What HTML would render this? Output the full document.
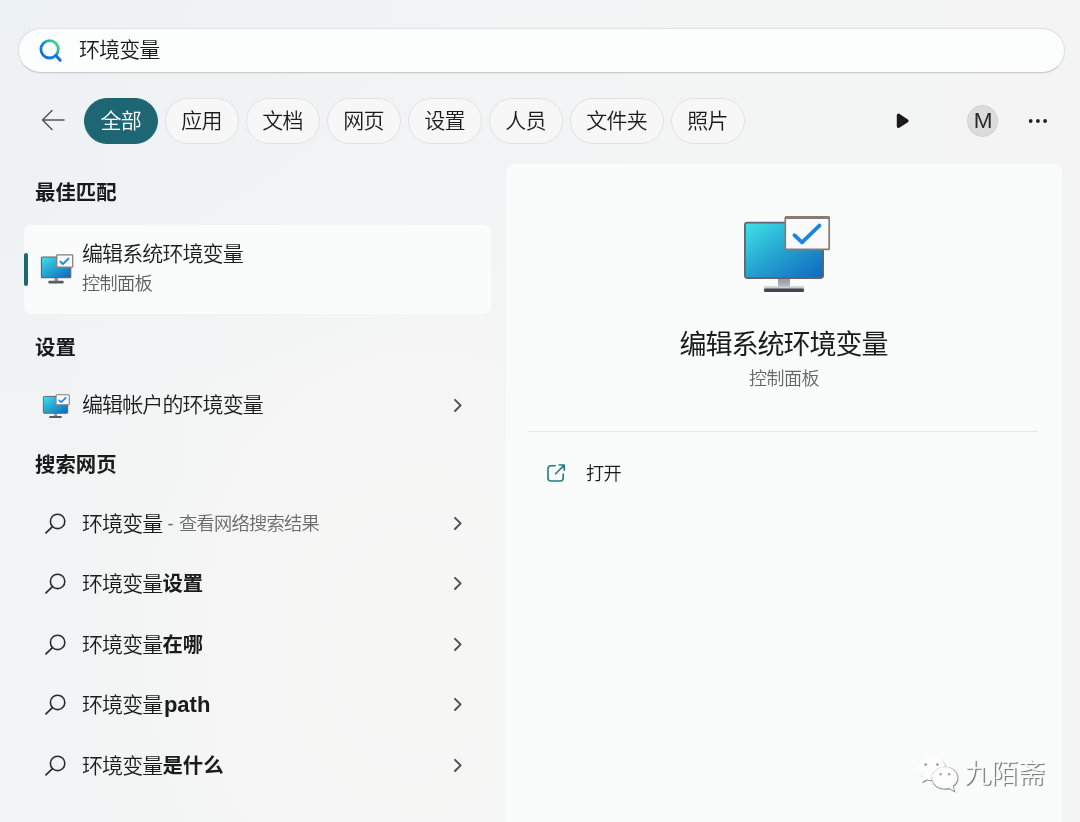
<!DOCTYPE html>
<html lang="zh-CN">
<head>
<meta charset="utf-8">
<title>搜索 - 环境变量</title>
<style>
*{box-sizing:border-box;margin:0;padding:0}
html,body{width:1080px;height:822px;overflow:hidden}
body{position:relative;background:radial-gradient(ellipse 700px 420px at 0 0,rgba(232,240,245,.5),rgba(232,240,245,0) 100%),radial-gradient(ellipse 420px 520px at 420px 640px,rgba(247,247,246,.9),rgba(247,247,246,0) 100%),linear-gradient(90deg,#f1f3f4 0,#f3f4f4 240px,#f4f4f4 100%);font-family:"Liberation Sans","Noto Sans CJK SC",sans-serif;color:#1b1b1b;font-weight:350}
.abs{position:absolute}
.t{position:absolute;white-space:nowrap;line-height:1}
.t,.row,h2,.tab{will-change:transform}
/* search box */
#sb{left:17.5px;top:27.8px;width:1047px;height:45.5px;border-radius:23px;background:#fcfdfd;border:1.3px solid #dfe0e0;border-bottom-color:#cbcccc;box-shadow:0 1px 1.5px rgba(0,0,0,.05)}
/* tabs */
.tab{position:absolute;top:98px;height:45.5px;border-radius:23px;background:#f7f7f7;border:1.2px solid #e0e1e1;font-size:21px;letter-spacing:-.8px;text-indent:-.8px;line-height:44px;text-align:center;color:#1b1b1b}
.tab.on{background:#1f6675;border-color:#1f6675;color:#fff}
h2{position:absolute;left:34.5px;font-size:20.4px;font-weight:700;line-height:1;white-space:nowrap;color:#1a1a1a}
.row{position:absolute;left:81.9px;font-size:21px;letter-spacing:-0.9px;line-height:1;white-space:nowrap;color:#1b1b1b}
.row b{font-weight:700;font-size:20.4px;letter-spacing:0}
.row .g i{font-style:normal;letter-spacing:0;margin:0 5.4px 0 5.2px}
.row .g{font-size:18.2px;letter-spacing:-0.7px;color:#6a6a6a;position:relative;top:-1.2px}
#card{left:24px;top:225px;width:467px;height:89px;border-radius:7px;background:#fafbfb}
#bar{left:24px;top:253px;width:4px;height:33px;border-radius:2px;background:#1f6675}
#panel{left:506px;top:164px;width:556px;height:700px;border-radius:9px;background:#fafbfb}
#hr{left:528px;top:431px;width:510px;height:1px;background:#e6e7e7}
svg{position:absolute;overflow:visible}
</style>
</head>
<body>
<svg width="0" height="0" style="left:0;top:0"><defs>
<linearGradient id="mg" x1="0" y1="0" x2="1" y2="1"><stop offset="0" stop-color="#40e3e8"/><stop offset=".45" stop-color="#27a7d3"/><stop offset="1" stop-color="#0d67c0"/></linearGradient>
<linearGradient id="st" x1="0" y1="0" x2="0" y2="1"><stop offset="0" stop-color="#8f959b"/><stop offset="1" stop-color="#b9bec4"/></linearGradient>
<symbol id="mon" viewBox="0 0 86 76" overflow="visible">
<rect x="34" y="62" width="12" height="9" fill="url(#st)"/>
<rect x="20" y="70.3" width="40" height="3" rx="1" fill="#c9ced4"/>
<rect x="20" y="72.6" width="40" height="3.4" rx="1.2" fill="#41464c"/>
<rect x=".9" y="6.6" width="78.2" height="55.4" rx="2.4" fill="url(#mg)" stroke="#626569" stroke-width="1.8"/>
<rect x="41.3" y=".8" width="43.9" height="32.6" rx="1" fill="#fafafa" stroke="#877b75" stroke-width="1.7"/><rect x="41.3" y=".8" width="43.9" height="2.2" fill="#877b75"/>
<path d="M50.4 19.2 L58 26.4 L75.4 9.6" fill="none" stroke="#1b85e2" stroke-width="3.8" stroke-linecap="round" stroke-linejoin="round"/>
</symbol>
<symbol id="mons" viewBox="0 0 86 79" preserveAspectRatio="none" overflow="visible">
<rect x="36" y="62" width="9" height="11" fill="#8e959c"/>
<rect x="20" y="71.5" width="40" height="7.2" rx="1.5" fill="#565d64"/>
<rect x="1.2" y="8" width="78" height="55" rx="2.5" fill="url(#mg)" stroke="#646a70" stroke-width="3.2"/>
<rect x="42" y="2.6" width="42.4" height="32.6" rx="1" fill="#fbfbfb" stroke="#857b76" stroke-width="3.2"/>
<path d="M52 20.5 L58.5 26.6 L73 12.4" fill="none" stroke="#2189e6" stroke-width="5.4" stroke-linecap="round" stroke-linejoin="round"/>
</symbol>
<symbol id="mag" viewBox="0 0 22 22" overflow="visible"><circle cx="13.6" cy="8.4" r="7.2" fill="none" stroke="#2b2b2b" stroke-width="1.6"/><path d="M8.4 13.7 L2 19.9" stroke="#2b2b2b" stroke-width="1.7" stroke-linecap="round"/></symbol>
<symbol id="chv" viewBox="0 0 8 13" overflow="visible"><path d="M1 .8 L6.6 6.4 L1 12" fill="none" stroke="#4e4e4e" stroke-width="1.9" stroke-linecap="round" stroke-linejoin="round"/></symbol>
</defs></svg>
<div class="abs" id="sb"></div>
<svg style="left:36px;top:36px" width="28" height="28" viewBox="0 0 28 28"><defs><linearGradient id="sg" x1="1" y1="0" x2="0" y2="1"><stop offset="0" stop-color="#58d86c"/><stop offset=".22" stop-color="#3cc39a"/><stop offset=".5" stop-color="#1a86dc"/><stop offset="1" stop-color="#0f6ad4"/></linearGradient></defs><circle cx="13.6" cy="13.3" r="8.7" fill="none" stroke="url(#sg)" stroke-width="2.8"/><path d="M20 19.8 L24.2 24.2" stroke="#1271d8" stroke-width="3" stroke-linecap="round"/></svg>
<div class="t" style="left:79px;top:39.4px;font-size:21px;letter-spacing:-0.9px">环境变量</div>

<svg style="left:40.7px;top:109.3px" width="24" height="22" viewBox="0 0 24 22"><path d="M11 1.5 L1.5 11 L11 20.5 M1.5 11 H23" fill="none" stroke="#555" stroke-width="1.5" stroke-linecap="round" stroke-linejoin="round"/></svg>
<div class="tab on" style="left:83.7px;width:74.3px">全部</div>
<div class="tab" style="left:164.7px;width:73.8px">应用</div>
<div class="tab" style="left:245.7px;width:73.8px">文档</div>
<div class="tab" style="left:326.7px;width:73.8px">网页</div>
<div class="tab" style="left:407.7px;width:73.8px">设置</div>
<div class="tab" style="left:488.7px;width:73.8px">人员</div>
<div class="tab" style="left:569.7px;width:94px">文件夹</div>
<div class="tab" style="left:671.3px;width:73.8px">照片</div>
<svg style="left:896px;top:113px" width="14" height="16" viewBox="0 0 14 16"><path d="M2.4 2.2 L11 7.8 L2.4 13.4 Z" fill="#1b1b1b" stroke="#1b1b1b" stroke-width="3.2" stroke-linejoin="round"/></svg>
<div class="abs" style="left:966.6px;top:105.2px;width:31.4px;height:31.4px;border-radius:16px;background:#dcdcdc;border:1px solid #d2d2d2"></div>
<div class="t" style="left:967.3px;top:110.4px;width:32px;text-align:center;font-size:22.5px;color:#2a2a2a">M</div>
<svg style="left:1028px;top:118px" width="20" height="6" viewBox="0 0 20 6"><circle cx="2.7" cy="3" r="1.9" fill="#222"/><circle cx="9.9" cy="3" r="1.9" fill="#222"/><circle cx="17.1" cy="3" r="1.9" fill="#222"/></svg>

<h2 style="top:182.8px">最佳匹配</h2>
<div class="abs" id="card"></div>
<div class="abs" id="bar"></div>
<div class="row" style="top:242.8px">编辑系统环境变量</div>
<div class="row" style="top:274.5px;font-size:18.2px;letter-spacing:-0.7px;color:#5f5f5f">控制面板</div>
<h2 style="top:337.5px">设置</h2>
<div class="row" style="top:393.8px">编辑帐户的环境变量</div>
<h2 style="top:455px">搜索网页</h2>
<div class="row" style="top:512.8px">环境变量<span class="g"><i>-</i>查看网络搜索结果</span></div>
<div class="row" style="top:572.8px">环境变量<b>设置</b></div>
<div class="row" style="top:633.8px">环境变量<b>在哪</b></div>
<div class="row" style="top:693.8px">环境变量<b style="font-size:22px;margin-left:1.5px">path</b></div>
<div class="row" style="top:754.8px">环境变量<b>是什么</b></div>

<div class="abs" id="panel"></div>
<div class="t" style="left:506px;width:556px;text-align:center;top:332px;font-size:27px;letter-spacing:-1px;text-indent:-1px;font-weight:400">编辑系统环境变量</div>
<div class="t" style="left:506px;width:556px;text-align:center;top:369.8px;font-size:18px;letter-spacing:-.5px;color:#666">控制面板</div>
<div class="abs" id="hr"></div>
<div class="t" style="left:586.3px;top:464.8px;font-size:18.2px;letter-spacing:-.7px">打开</div>

<svg style="left:40.6px;top:254.4px" width="32.3" height="29.6"><use href="#mons" width="32.3" height="29.6"/></svg>
<svg style="left:43.1px;top:393.6px" width="26.8" height="24.2"><use href="#mons" width="26.8" height="24.2"/></svg>
<svg style="left:744px;top:216px" width="86" height="76"><use href="#mon" width="86" height="76"/></svg>
<svg style="left:44.2px;top:513.1px" width="22" height="22"><use href="#mag" width="22" height="22"/></svg>
<svg style="left:44.2px;top:573.1px" width="22" height="22"><use href="#mag" width="22" height="22"/></svg>
<svg style="left:44.2px;top:634.1px" width="22" height="22"><use href="#mag" width="22" height="22"/></svg>
<svg style="left:44.2px;top:694.1px" width="22" height="22"><use href="#mag" width="22" height="22"/></svg>
<svg style="left:44.2px;top:755.1px" width="22" height="22"><use href="#mag" width="22" height="22"/></svg>
<svg style="left:453.9px;top:399.2px" width="8" height="13"><use href="#chv" width="8" height="13"/></svg>
<svg style="left:453.9px;top:517.3px" width="8" height="13"><use href="#chv" width="8" height="13"/></svg>
<svg style="left:453.9px;top:577.3px" width="8" height="13"><use href="#chv" width="8" height="13"/></svg>
<svg style="left:453.9px;top:638.3px" width="8" height="13"><use href="#chv" width="8" height="13"/></svg>
<svg style="left:453.9px;top:698.3px" width="8" height="13"><use href="#chv" width="8" height="13"/></svg>
<svg style="left:453.9px;top:759.3px" width="8" height="13"><use href="#chv" width="8" height="13"/></svg>
<svg style="left:546px;top:463px" width="20" height="20" viewBox="0 0 20 20"><path d="M9.3 2.8 H5 A3 3 0 0 0 2 5.8 V15 A3 3 0 0 0 5 18 H14.2 A3 3 0 0 0 17.2 15 V11" fill="none" stroke="#2a7886" stroke-width="1.6" stroke-linecap="round"/><path d="M9.6 10.8 L18 2.4 M13.2 2 H18.2 V7.2" fill="none" stroke="#2a7886" stroke-width="1.6" stroke-linecap="round" stroke-linejoin="round"/></svg>
<svg style="left:915.5px;top:755.5px" width="44" height="38" viewBox="0 0 44 38">
<path d="M15.5 .5 C7.6 .5 1.5 5.8 1.5 12.3 C1.5 16 3.5 19.2 6.6 21.4 L5.2 26.4 L10.6 23.5 C12.1 23.9 13.8 24.1 15.5 24.1 C23.4 24.1 29.5 18.8 29.5 12.3 C29.5 5.8 23.4 .5 15.5 .5 Z" fill="#8f8f8f" transform="translate(1,1.1)"/><path d="M15.5 .5 C7.6 .5 1.5 5.8 1.5 12.3 C1.5 16 3.5 19.2 6.6 21.4 L5.2 26.4 L10.6 23.5 C12.1 23.9 13.8 24.1 15.5 24.1 C23.4 24.1 29.5 18.8 29.5 12.3 C29.5 5.8 23.4 .5 15.5 .5 Z" fill="#fdfdfd"/>
<circle cx="9.6" cy="8.6" r="1.5" fill="#a9a9a9"/><circle cx="21.4" cy="8.6" r="1.5" fill="#a9a9a9"/>
<path d="M29 11.6 C22 11.6 16.6 16.3 16.6 22.1 C16.6 27.9 22 32.6 29 32.6 C30.5 32.6 31.9 32.4 33.2 32 L37.9 34.6 L36.7 30.3 C39.6 28.4 41.4 25.4 41.4 22.1 C41.4 16.3 36 11.6 29 11.6 Z" fill="#8f8f8f" stroke="#8f8f8f" stroke-width="2" transform="translate(.1,.2)"/><path d="M29 11.6 C22 11.6 16.6 16.3 16.6 22.1 C16.6 27.9 22 32.6 29 32.6 C30.5 32.6 31.9 32.4 33.2 32 L37.9 34.6 L36.7 30.3 C39.6 28.4 41.4 25.4 41.4 22.1 C41.4 16.3 36 11.6 29 11.6 Z" fill="#fdfdfd" stroke="#fdfdfd" stroke-width=".8" transform="translate(-.3,-.4)"/>
<circle cx="24.6" cy="18.2" r="1.3" fill="#a9a9a9"/><circle cx="33.2" cy="18.2" r="1.3" fill="#a9a9a9"/>
</svg>
<div class="t" style="left:964px;top:761px;font-size:27px;color:#fcfcfc;text-shadow:1.2px 1.2px 0.8px rgba(80,80,80,.8);letter-spacing:0">九陌斋</div>
</body>
</html>
